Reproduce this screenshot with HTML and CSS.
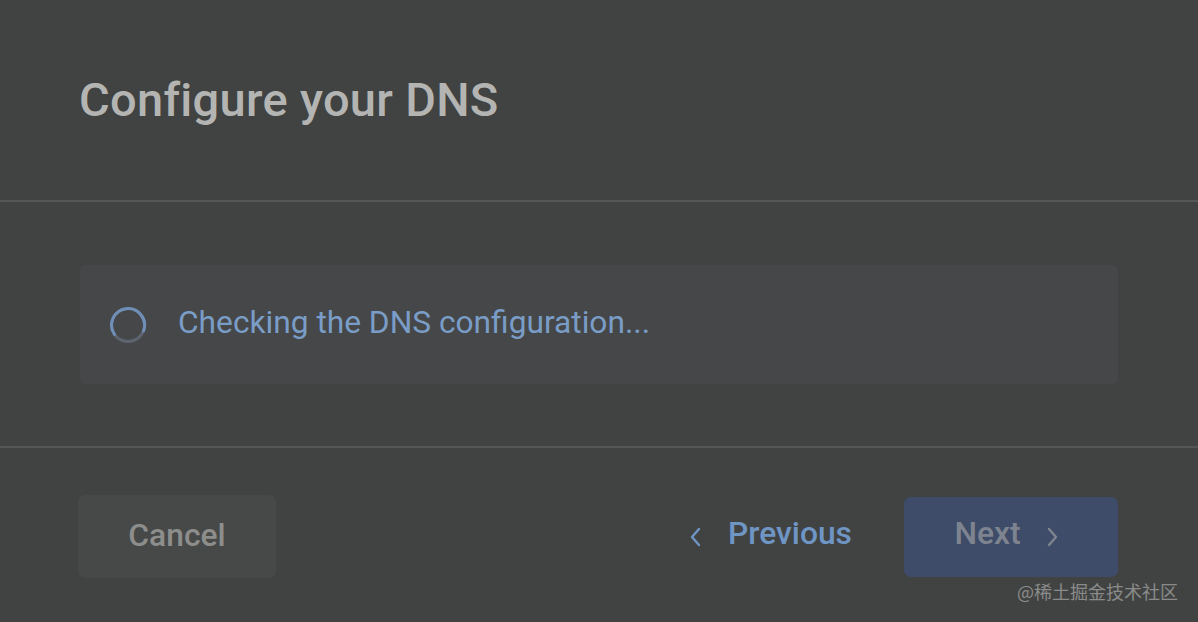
FILE: index.html
```html
<!DOCTYPE html>
<html>
<head>
<meta charset="utf-8">
<link rel="stylesheet" href="styles.css">
</head>
<body>
<div class="dialog">
  <header class="head">
    <h1 class="title">Configure your DNS</h1>
  </header>
  <section class="body">
    <div class="status">
      <svg class="spinner" width="40" height="40" viewBox="0 0 40 40">
        <circle cx="20" cy="20" r="16.5" fill="none" stroke="#5d6470" stroke-width="3"/>
        <path d="M 6.5 29.5 A 16.5 16.5 0 1 1 35.5 26" fill="none" stroke="#6f8fb8" stroke-width="3" stroke-linecap="round"/>
      </svg>
      <span class="status-text">Checking the DNS configuration...</span>
    </div>
  </section>
  <footer class="foot">
    <button class="btn btn-cancel"><span class="cancel-label">Cancel</span></button>
    <div class="nav">
      <button class="btn btn-prev">
        <svg class="chev" width="14" height="20" viewBox="0 0 14 20"><path d="M11 2 L4 10 L11 18" fill="none" stroke="currentColor" stroke-width="2.4" stroke-linecap="round" stroke-linejoin="round"/></svg>
        <span>Previous</span>
      </button>
      <button class="btn btn-next">
        <span>Next</span>
        <svg class="chev" width="14" height="20" viewBox="0 0 14 20"><path d="M3 2 L10 10 L3 18" fill="none" stroke="currentColor" stroke-width="2.4" stroke-linecap="round" stroke-linejoin="round"/></svg>
      </button>
    </div>
  </footer>
  <div class="watermark">@稀土掘金技术社区</div>
</div>
</body>
</html>
```
FILE: styles.css
```css
* { box-sizing: border-box; }
html, body {
  margin: 0;
  padding: 0;
  width: 1198px;
  height: 622px;
  overflow: hidden;
  background: #414342;
  font-family: Roboto, "Noto Sans", "Noto Sans CJK SC", sans-serif;
}
.dialog {
  position: relative;
  width: 1198px;
  height: 622px;
}
.head {
  height: 202px;
  padding: 72px 0 0 79px;
  border-bottom: 2px solid #555756;
}
.title {
  margin: 0;
  font-size: 47px;
  font-weight: 500;
  line-height: 56px;
  color: #b4b5b3;
  letter-spacing: 0.3px;
}
.body {
  height: 246px;
  padding: 63px 80px 0 80px;
  border-bottom: 2px solid #545655;
}
.status {
  height: 119px;
  background: #464748;
  border-radius: 6px;
  display: flex;
  align-items: center;
  padding-left: 28px;
  gap: 30px;
}
.spinner { flex: none; }
.status-text {
  font-size: 31.7px;
  color: #7a9dc7;
  position: relative;
  top: -2px;
}
.foot {
  display: flex;
  justify-content: space-between;
  align-items: center;
  padding: 47px 80px 0 78px;
}
.btn {
  border: none;
  background: none;
  font-family: inherit;
  font-weight: 500;
  font-size: 31.8px;
  display: flex;
  align-items: center;
  padding: 0;
}
.btn span { position: relative; top: -4px; }
.btn .cancel-label { top: -2px; }
.btn-cancel {
  width: 198px;
  height: 83px;
  background: #474848;
  border-radius: 7px;
  color: #8d8e8c;
  justify-content: center;
}
.nav {
  display: flex;
  align-items: center;
  gap: 52px;
}
.btn-prev {
  color: #6f95c5;
  gap: 26px;
  height: 80px;
}
.btn-next {
  width: 214px;
  height: 80px;
  background: #3e4c69;
  border-radius: 7px;
  color: #7e848f;
  justify-content: center;
  gap: 25px;
  padding-right: 8px;
}
.chev { flex: none; }
.watermark {
  position: absolute;
  left: 1017px;
  top: 578px;
  font-size: 18px;
  color: #8a8b8a;
  font-family: "Noto Sans CJK SC", sans-serif;
}
```
